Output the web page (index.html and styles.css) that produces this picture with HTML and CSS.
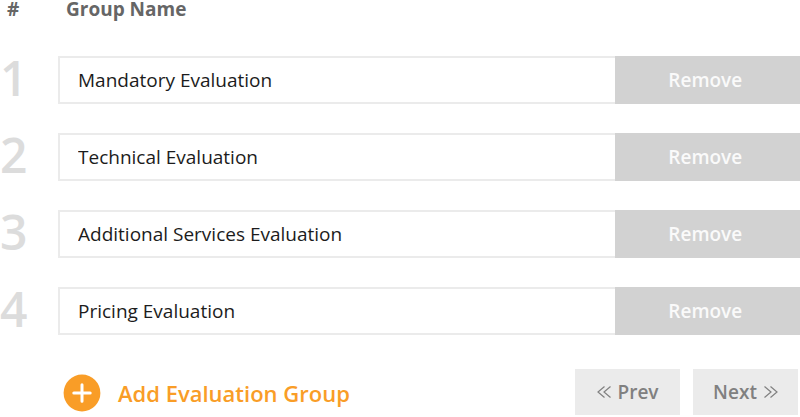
FILE: index.html
```html
<!DOCTYPE html>
<html lang="en">
<head>
<meta charset="utf-8">
<title>Evaluation Groups</title>
<link rel="stylesheet" href="styles.css">
</head>
<body>
<form class="groups">
  <table class="group-table">
    <thead>
      <tr><th class="num-head" scope="col">#</th><th scope="col">Group Name</th></tr>
    </thead>
    <tbody>
      <tr><td class="num">1</td><td><div class="field"><input class="name" type="text" aria-label="Group 1 name" value="Mandatory Evaluation"><button class="remove" type="button">Remove</button></div></td></tr>
      <tr><td class="num">2</td><td><div class="field"><input class="name" type="text" aria-label="Group 2 name" value="Technical Evaluation"><button class="remove" type="button">Remove</button></div></td></tr>
      <tr><td class="num">3</td><td><div class="field"><input class="name" type="text" aria-label="Group 3 name" value="Additional Services Evaluation"><button class="remove" type="button">Remove</button></div></td></tr>
      <tr><td class="num">4</td><td><div class="field"><input class="name" type="text" aria-label="Group 4 name" value="Pricing Evaluation"><button class="remove" type="button">Remove</button></div></td></tr>
    </tbody>
  </table>
  <div class="actions">
    <button class="add" type="button">
      <svg width="38" height="38" viewBox="0 0 38 38" aria-hidden="true"><circle cx="19" cy="19" r="18.4" fill="#f99d27"/><path d="M19 10.8v16.4M10.8 19h16.4" stroke="#fff" stroke-width="3" stroke-linecap="round"/></svg>
      <span>Add Evaluation Group</span>
    </button>
    <div class="pager">
      <button class="page" type="button"><svg width="14" height="14" viewBox="0 0 14 14" aria-hidden="true"><path d="M7.5 1.5L1 7l6.5 5.5M13.5 1.5L7 7l6.5 5.5" fill="none" stroke="#808080" stroke-width="1.2"/></svg>Prev</button>
      <button class="page" type="button">Next<svg width="14" height="14" viewBox="0 0 14 14" aria-hidden="true"><path d="M.5 1.5L7 7 .5 12.5M6.5 1.5L13 7l-6.5 5.5" fill="none" stroke="#808080" stroke-width="1.2"/></svg></button>
    </div>
  </div>
</form>
</body>
</html>
```
FILE: styles.css
```css
* { box-sizing: border-box; }
body { margin: 0; background: #fff; color: #1c1c1c; font-family: "Open Sans", sans-serif; }
button, input { font: inherit; border-radius: 0; }
button { border: 0; cursor: pointer; }
.group-table { width: 100%; border-collapse: collapse; }
th { height: 41px; padding: 0 0 23px 8px; text-align: left; font-size: 19px; line-height: 18px; color: #666; }
.num-head { width: 58px; padding-left: 7px; }
td { height: 77px; padding: 0; }
.num { padding-bottom: 3px; color: #dcdcdc; font-size: 48px; line-height: 48px; font-weight: 600; }
.field { display: flex; height: 48px; }
.name { flex: 1; min-width: 0; padding: 0 18px; border: 2px solid #ebebeb; border-right: 0; font-size: 19px; color: #1c1c1c; background: #fff; }
.remove { flex: none; width: 25%; padding: 0 4px 0 0; background: #d2d2d2; color: #fafafa; font-size: 19px; font-weight: 600; }
.actions { display: flex; justify-content: space-between; padding: 20px 2px 0 63px; }
.add { display: flex; align-items: center; gap: 17px; height: 48px; padding: 0; background: none; color: #f99d27; font-size: 22px; font-weight: 600; }
.pager { display: flex; gap: 13px; }
.page { display: flex; align-items: center; justify-content: center; gap: 7px; width: 105px; height: 46px; padding: 0; background: #ebebeb; color: #808080; font-size: 19px; font-weight: 600; }
```
